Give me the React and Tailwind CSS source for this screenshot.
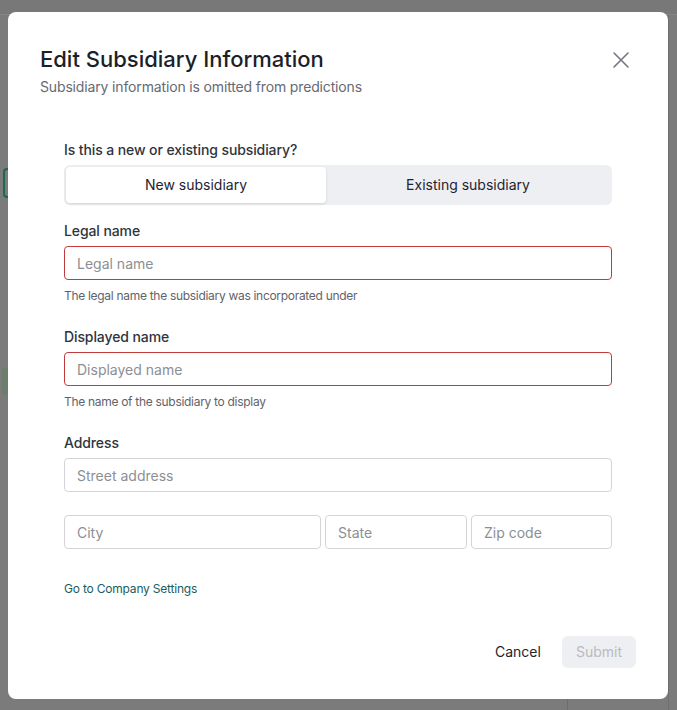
import React, { useState } from 'react';

const Field = ({ label, placeholder, help, error }) => (
  <div>
    <label className="block text-sm font-medium leading-5 tracking-[-0.1px] text-[#2f343c]">{label}</label>
    <input
      placeholder={placeholder}
      className={
        'mt-[5px] block w-full h-[34px] rounded-[4px] border px-3 text-sm text-[#1f2330] placeholder:text-[#8c8f95] outline-none ' +
        (error ? 'border-[#c23b3b]' : 'border-[#d3d5d9]')
      }
    />
    {help && <p className="mt-[8px] text-xs leading-4 tracking-[-0.3px] text-[#5f636b]">{help}</p>}
  </div>
);

export default function App() {
  const [mode, setMode] = useState('new');

  return (
    <div
      className="relative h-[710px] w-[677px] overflow-hidden bg-[#7b7b7b]"
      style={{ fontFamily: 'Inter, "Noto Sans", sans-serif' }}
    >
      {/* bits of the page behind the overlay */}
      <div className="absolute left-0 top-0 h-[15px] w-full border-b border-[#858585] bg-[#787878]" />
      <div className="absolute left-[3px] top-[168px] h-[30px] w-[6px] rounded-l-sm border-2 border-r-0 border-[#1d6b4a]" />
      <div className="absolute left-[2px] top-[368px] h-[27px] w-[6px] bg-[#6f7d6f]" />
      <div className="absolute right-0 top-[15px] h-full w-[9px] border-l border-[#6e6e6e]" />
      <div className="absolute bottom-0 left-[567px] h-[11px] w-px bg-[#6e6e6e]" />

      <div className="absolute left-[8px] top-[12px] flex h-[687px] w-[660px] flex-col rounded-lg bg-white">
        <div className="flex items-start justify-between pl-8 pr-[38px] pt-[33px]">
          <div>
            <h2 className="text-[22px] font-medium leading-7 text-[#1c1f2a]">
              Edit Subsidiary Information
            </h2>
            <p className="mt-[4px] text-sm leading-5 tracking-[-0.15px] text-[#666a72]">
              Subsidiary information is omitted from predictions
            </p>
          </div>
          <button className="mt-[6px] text-[#737780]">
            <svg width="18" height="18" viewBox="0 0 18 18" fill="none" stroke="currentColor" strokeWidth="1.6" strokeLinecap="round">
              <path d="M2 2L16 16M16 2L2 16" />
            </svg>
          </button>
        </div>

        <div className="mt-[43px] px-14">
          <p className="text-sm font-medium leading-5 tracking-[-0.1px] text-[#2f343c]">Is this a new or existing subsidiary?</p>
          <div className="mt-[5px] flex h-10 rounded-md bg-[#eeeff2] p-[2px]">
            <button
              onClick={() => setMode('new')}
              className={
                'w-[260px] rounded-[4px] text-sm text-[#1f2330] ' +
                (mode === 'new' ? 'bg-white shadow-[0_1px_3px_rgba(0,0,0,0.12)]' : '')
              }
            >
              New subsidiary
            </button>
            <button
              onClick={() => setMode('existing')}
              className={
                'flex-1 rounded-[4px] text-sm text-[#1f2330] ' +
                (mode === 'existing' ? 'bg-white shadow-[0_1px_3px_rgba(0,0,0,0.12)]' : '')
              }
            >
              Existing subsidiary
            </button>
          </div>

          <div className="mt-[16px] flex flex-col gap-[23px]">
            <Field label="Legal name" placeholder="Legal name" help="The legal name the subsidiary was incorporated under" error />
            <Field label="Displayed name" placeholder="Displayed name" help="The name of the subsidiary to display" error />
            <div>
              <Field label="Address" placeholder="Street address" />
              <div className="mt-[23px] flex gap-1">
                <input placeholder="City" className="h-[34px] w-[257px] rounded-[4px] border border-[#d3d5d9] px-3 text-sm placeholder:text-[#8c8f95] outline-none" />
                <input placeholder="State" className="h-[34px] w-[142px] rounded-[4px] border border-[#d3d5d9] px-3 text-sm placeholder:text-[#8c8f95] outline-none" />
                <input placeholder="Zip code" className="h-[34px] min-w-0 flex-1 rounded-[4px] border border-[#d3d5d9] px-3 text-sm placeholder:text-[#8c8f95] outline-none" />
              </div>
            </div>
          </div>

          <a href="#" className="mt-[32px] inline-block text-xs leading-4 tracking-[-0.2px] text-[#1b5d62]">Go to Company Settings</a>
        </div>

        <div className="mt-auto mb-[31px] flex items-center justify-end gap-[21px] pr-8">
          <button className="text-sm text-[#1f2330]">Cancel</button>
          <button disabled className="h-8 rounded-md bg-[#eeeff2] px-[14px] text-sm text-[#b8bbc1]">Submit</button>
        </div>
      </div>
    </div>
  );
}
